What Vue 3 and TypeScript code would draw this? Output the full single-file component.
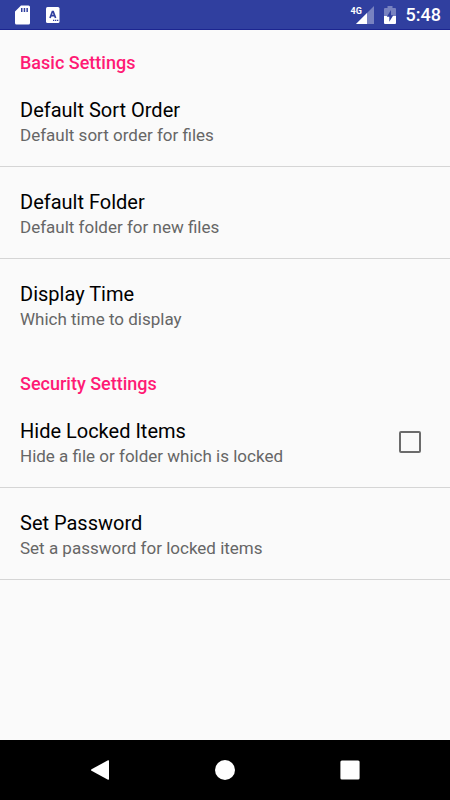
<script setup lang="ts">
import { reactive } from 'vue'

interface Preference {
  id: string
  title: string
  summary: string
  toggle?: boolean
}

interface Category {
  title: string
  items: Preference[]
}

const categories: Category[] = [
  {
    title: 'Basic Settings',
    items: [
      { id: 'sort', title: 'Default Sort Order', summary: 'Default sort order for files' },
      { id: 'folder', title: 'Default Folder', summary: 'Default folder for new files' },
      { id: 'time', title: 'Display Time', summary: 'Which time to display' },
    ],
  },
  {
    title: 'Security Settings',
    items: [
      { id: 'hide', title: 'Hide Locked Items', summary: 'Hide a file or folder which is locked', toggle: true },
      { id: 'password', title: 'Set Password', summary: 'Set a password for locked items' },
    ],
  },
]

const checked = reactive<Record<string, boolean>>({ hide: false })
</script>

<template>
  <div class="screen">
    <header class="status">
      <div class="group">
        <svg width="16" height="20" viewBox="0 0 16 20">
          <path fill="#fff" fill-rule="evenodd" d="M6 .5h7.500a1.500 1.500 0 0 1 1.500 1.500v16a1.500 1.500 0 0 1-1.500 1.500h-12a1.500 1.500 0 0 1-1.500-1.500V6.500zM6 3v4h1.500V3zM8.700 3v4h1.500V3zM11.400 3v4h1.500V3z" />
        </svg>
        <svg width="14" height="16" viewBox="0 0 14 16">
          <rect width="13.500" height="16" rx="1.500" fill="#fff" />
          <path d="M4 11 6.400 4.500h.8L9.600 11M5 8.700h3.800" fill="none" stroke="#303f9f" stroke-width="1.700" />
          <path d="M7 13.300h1.300M9 13.300h1.300M11 13.300h1.300" stroke="#303f9f" stroke-width="1.200" />
        </svg>
      </div>
      <div class="group right">
        <div class="signal">
          <span class="net">4G</span>
          <svg width="18" height="18" viewBox="0 0 18 18">
            <path d="M18 0v18H0z" fill="#fff" fill-opacity=".35" />
            <path d="M11 7v11H0z" fill="#fff" />
          </svg>
        </div>
        <svg width="12" height="18" viewBox="0 0 12 18">
          <path d="M3.500 0h5v2H11a1 1 0 0 1 1 1v7H0V3a1 1 0 0 1 1-1h2.500z" fill="#fff" fill-opacity=".35" />
          <path d="M0 10h12v7a1 1 0 0 1-1 1H1a1 1 0 0 1-1-1z" fill="#fff" />
          <path d="M7 4 2.800 10.800H5.300v5L9.300 9.300H7z" fill="#303f9f" />
        </svg>
        <span class="clock">5:48</span>
      </div>
    </header>

    <main class="content">
      <section v-for="category in categories" :key="category.title">
        <h2>{{ category.title }}</h2>
        <div class="list">
          <template v-for="item in category.items" :key="item.id">
            <label v-if="item.toggle" class="row" :for="item.id">
              <span class="text">
                <span class="title">{{ item.title }}</span>
                <span class="summary">{{ item.summary }}</span>
              </span>
              <input :id="item.id" v-model="checked[item.id]" type="checkbox" />
            </label>
            <button v-else class="row" type="button">
              <span class="text">
                <span class="title">{{ item.title }}</span>
                <span class="summary">{{ item.summary }}</span>
              </span>
            </button>
          </template>
        </div>
      </section>
    </main>

    <nav class="navbar">
      <button type="button" aria-label="Back">
        <svg width="20" height="20" viewBox="0 0 20 20">
          <path d="M18 .3Q19 0 19 1v18q0 1-1 .7L1.500 10.800Q.5 10 1.500 9.200z" fill="#fff" />
        </svg>
      </button>
      <button type="button" aria-label="Home">
        <svg width="20" height="20" viewBox="0 0 20 20"><circle cx="10" cy="10" r="10" fill="#fff" /></svg>
      </button>
      <button type="button" aria-label="Overview">
        <svg width="20" height="20" viewBox="0 0 20 20"><rect x=".4" y=".4" width="19.200" height="19.200" rx="1.500" fill="#fff" /></svg>
      </button>
    </nav>
  </div>
</template>

<style>
body {
  margin: 0;
  background: #fafafa;
}
</style>

<style scoped>
.screen {
  display: flex;
  flex-direction: column;
  min-height: 100vh;
  background: #fafafa;
  color: #000;
  font-family: Roboto, 'Liberation Sans', sans-serif;
}

svg {
  display: block;
}

.status {
  box-sizing: border-box;
  display: flex;
  align-items: center;
  justify-content: space-between;
  height: 30px;
  padding: 1px 9px 0 15px;
  border-bottom: 1px solid #1c2590;
  background: #303f9f;
  color: #fff;
}

.group {
  display: flex;
  align-items: center;
  gap: 15px;
}

.right {
  gap: 10px;
}

.signal {
  position: relative;
}

.net {
  position: absolute;
  top: -1px;
  left: -5px;
  font-size: 9px;
  line-height: 12px;
  font-weight: 700;
}

.clock {
  font-size: 18px;
  line-height: 28px;
  font-weight: 500;
}

.content {
  flex: 1;
}

h2 {
  margin: 0;
  padding: 21px 20px 0;
  color: #ff1a75;
  font-size: 18px;
  line-height: 24px;
  font-weight: 500;
}

.row {
  box-sizing: border-box;
  display: flex;
  align-items: center;
  justify-content: space-between;
  width: 100%;
  margin: 0;
  padding: 21px 29px 20px 20px;
  border: 0;
  border-bottom: 1px solid #d5d5d5;
  background: none;
  color: inherit;
  font: inherit;
  text-align: left;
  cursor: pointer;
}

section:first-child .row:last-child {
  border-color: transparent;
}

.text {
  display: flex;
  flex-direction: column;
}

.title {
  font-size: 20px;
  line-height: 28px;
}

.summary {
  color: #666;
  font-size: 17px;
  line-height: 22px;
}

input {
  appearance: none;
  box-sizing: border-box;
  width: 22px;
  height: 22px;
  margin: 0;
  border: 2px solid #6b6b6b;
  border-radius: 2px;
}

input:checked {
  border-color: #ff1a75;
  background: #ff1a75;
}

.navbar {
  display: flex;
  justify-content: center;
  gap: 65px;
  height: 60px;
  background: #000;
}

.navbar button {
  display: grid;
  place-items: center;
  width: 60px;
  padding: 0;
  border: 0;
  background: none;
}
</style>
